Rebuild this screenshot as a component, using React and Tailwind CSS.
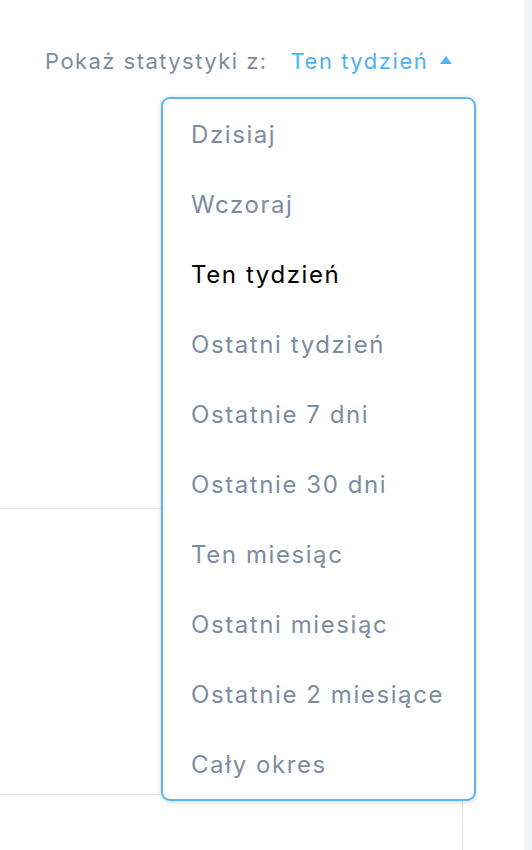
import React from "react";

const options = [
  "Dzisiaj",
  "Wczoraj",
  "Ten tydzień",
  "Ostatni tydzień",
  "Ostatnie 7 dni",
  "Ostatnie 30 dni",
  "Ten miesiąc",
  "Ostatni miesiąc",
  "Ostatnie 2 miesiące",
  "Cały okres",
];

function App() {
  const selected = "Ten tydzień";

  return (
    <div
      className="flex w-[532px] h-[850px] overflow-hidden bg-white"
      style={{ fontFamily: "Inter, 'Noto Sans', sans-serif" }}
    >
      <div className="relative w-[524px] h-full">
        {/* header */}
        <div className="h-[97px] flex items-start pl-[45px] pt-[44px]">
          <span className="text-[22px] leading-[34px] tracking-[0.066em] text-[#7e8c9f]">
            Pokaż statystyki z:
          </span>
          <button className="ml-[23px] flex items-center text-[22px] leading-[34px] tracking-[0.07em] text-[#4fb2f5]">
            Ten tydzień
            <svg width="12" height="8" viewBox="0 0 12 8" className="ml-[12px] mb-[2px]">
              <path d="M6 0 L12 8 L0 8 Z" fill="#4fb2f5" />
            </svg>
          </button>
        </div>

        {/* background cards */}
        <div className="w-[463px] h-[412px] border-b border-[#e6e6e6]" />
        <div className="h-[285px]" />
        <div className="w-[463px] h-[60px] border-t border-r border-[#e3e3e3]" />

        {/* dropdown */}
        <div className="absolute left-[161px] top-[97px] w-[315px] bg-white border-2 border-[#5ab7f6] rounded-[9px] shadow-[0_1px_4px_rgba(0,0,0,0.18)]">
          {options.map((opt) => (
            <div
              key={opt}
              className={
                opt === selected
                  ? "h-[70px] flex items-center pl-[28px] pt-[1px] text-[24px] tracking-[0.066em] text-black"
                  : "h-[70px] flex items-center pl-[28px] pt-[1px] text-[24px] tracking-[0.066em] text-[#7e8c9f]"
              }
            >
              {opt}
            </div>
          ))}
        </div>
      </div>
      <div className="flex-1 bg-[#f3f4f8]" />
    </div>
  );
}

export default App;
